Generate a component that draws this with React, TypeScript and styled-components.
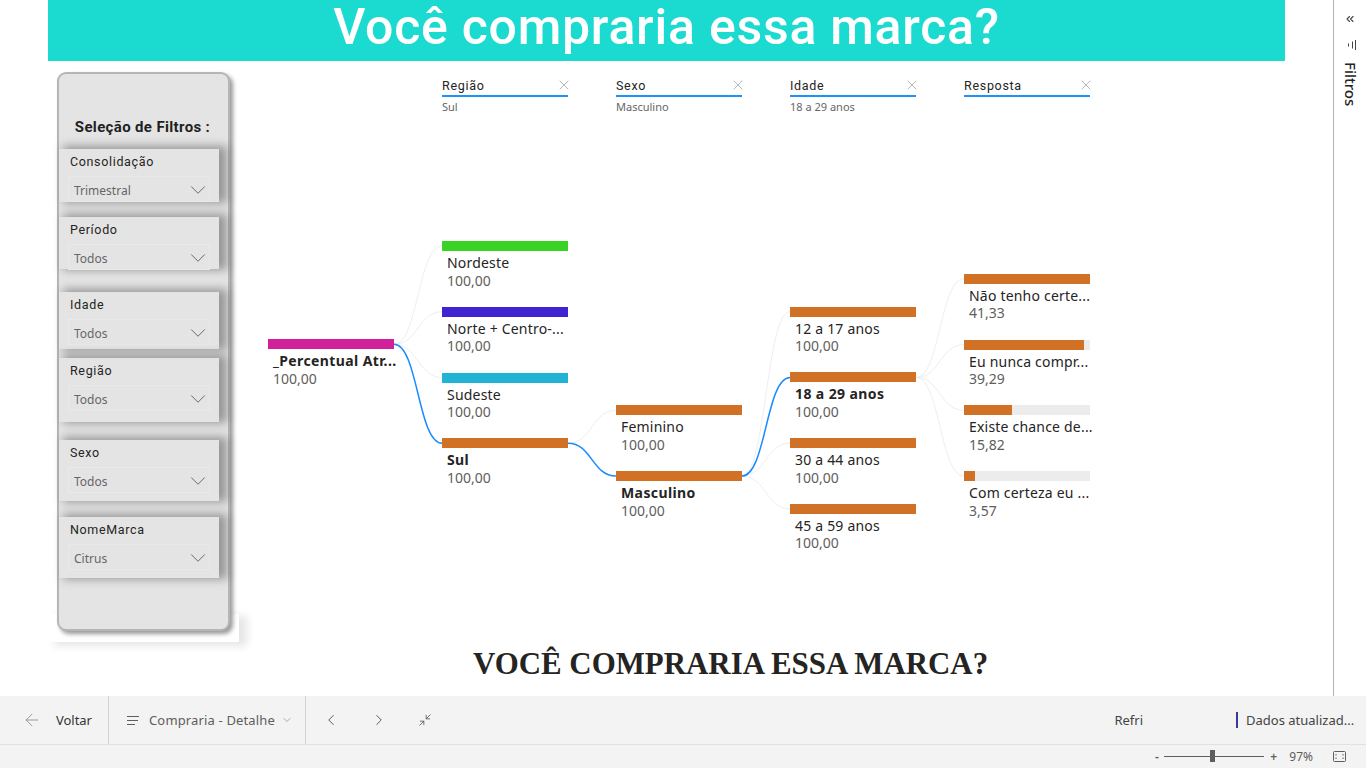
import React from 'react';
import styled, {createGlobalStyle} from 'styled-components';
import {ArrowLeft, ChevronDown, ChevronLeft, ChevronRight, ChevronsLeft, Minimize2, X} from 'lucide-react';

const GlobalStyle = createGlobalStyle`
  html {
    background: #fff;
  }
  html, body {
    margin: 0;
    padding: 0;
    overflow: hidden;
  }
  * {
    box-sizing: border-box;
  }
  body {
    font-family: "Noto Sans", "Open Sans", sans-serif;
    color: #252423;
  }
`;

const DIN = `"Roboto", "Noto Sans", sans-serif`;

const Page = styled.div`
  width: 1366px;
  height: 768px;
  display: flex;
  flex-direction: column;
`;

const Main = styled.div`
  flex: 1;
  min-height: 0;
  display: flex;
`;

const Report = styled.div`
  width: 1333px;
  display: flex;
  flex-direction: column;
`;

const Banner = styled.h1`
  margin: 0 0 0 48px;
  width: 1237px;
  height: 61px;
  background: #1bdad0;
  color: #fff;
  font-family: ${DIN};
  font-size: 50px;
  font-weight: 500;
  line-height: 54px;
  letter-spacing: 0.75px;
  text-align: center;
`;

const Body = styled.div`
  flex: 1;
  display: flex;
  padding-left: 57px;
`;

const Panel = styled.aside`
  position: relative;
  width: 173px;
  height: 559px;
  margin-top: 11px;
  padding-top: 44px;
  background: #e4e4e4;
  border: 2px solid #b6b6b6;
  border-radius: 9px;
  box-shadow: 3px 3px 4px rgba(0, 0, 0, 0.4);

  &::before {
    content: '';
    position: absolute;
    z-index: -1;
    left: -11px;
    top: 540px;
    width: 191px;
    height: 28px;
    background: #fff;
    box-shadow: 7px 3px 8px 1px rgba(0, 0, 0, 0.1);
  }
`;

const PanelTitle = styled.div`
  font-family: ${DIN};
  font-size: 15px;
  font-weight: 700;
  line-height: 18px;
  text-align: center;
  color: #1f1f1f;
  letter-spacing: 0.35px;
  margin-right: 2px;
  margin-bottom: 13px;
`;

const Slicer = styled.div<{$height: number; $gap: number}>`
  width: 160px;
  height: ${({$height}) => $height}px;
  margin-top: ${({$gap}) => $gap}px;
  padding: 4px 9px 0 9px;
  background: #e4e4e4;
  box-shadow: 6px -1px 9px 2px rgba(0, 0, 0, 0.34);
`;

const SlicerLabel = styled.div`
  font-family: ${DIN};
  font-size: 12.5px;
  font-weight: 400;
  line-height: 18px;
  height: 23px;
  padding-left: 2px;
  letter-spacing: 0.65px;
  color: #252423;
`;

const Dropdown = styled.div`
  height: 26px;
  display: flex;
  align-items: center;
  justify-content: space-between;
  padding: 2px 4px 0 5px;
  border: 1px solid #e9e9e9;
  font-family: "Noto Sans", sans-serif;
  font-size: 12px;
  color: #666;
`;

const Tree = styled.div`
  position: relative;
  width: 822px;
  height: 560px;
  margin-top: 16px;
  display: grid;
  grid-template-columns: repeat(5, 126px);
  column-gap: 48px;
`;

const Links = styled.svg`
  position: absolute;
  left: 0;
  top: 0;
  pointer-events: none;
`;

const Column = styled.div`
  display: flex;
  flex-direction: column;
`;

const Header = styled.div`
  height: 39px;
`;

const HeaderTop = styled.div<{$visible: boolean}>`
  display: flex;
  align-items: center;
  justify-content: space-between;
  height: 20px;
  padding-bottom: 2px;
  border-bottom: ${({$visible}) => ($visible ? '2px solid #2090ff' : 'none')};
  font-family: ${DIN};
  font-size: 12.5px;
  font-weight: 400;
  letter-spacing: 0.7px;
  color: #252423;
`;

const CloseIcon = styled(X)`
  margin-right: -3.5px;
  color: #999;
`;

const HeaderValue = styled.div`
  font-size: 11px;
  line-height: 20px;
  color: #666;
`;

const Nodes = styled.div<{$top: number}>`
  display: flex;
  flex-direction: column;
  padding-top: ${({$top}) => $top}px;
`;

const Node = styled.div`
  position: relative;
  z-index: 1;
  height: 65.75px;
`;

const Track = styled.div`
  height: 10px;
  background: #ececec;
`;

const Fill = styled.div<{$color: string}>`
  height: 100%;
  background: ${({$color}) => $color};
`;

const NodeName = styled.div<{$selected?: boolean}>`
  margin: 3px 0 0 5px;
  font-size: 14px;
  line-height: 17.5px;
  font-weight: ${({$selected}) => ($selected ? 700 : 400)};
  letter-spacing: ${({$selected}) => ($selected ? 0.4 : 0.2)}px;
  color: #252423;
  white-space: nowrap;
`;

const NodeValue = styled.div`
  margin-left: 5px;
  font-size: 14px;
  line-height: 17px;
  color: #605e5c;
`;

const Title = styled.div`
  width: 822px;
  margin-top: 9px;
  padding-left: 205px;
  font-family: "Liberation Serif", serif;
  font-size: 30.9px;
  font-weight: 700;
  line-height: 36px;
  color: #252423;
  white-space: nowrap;
`;

const TreeArea = styled.div`
  margin-left: 38px;
`;

const Rail = styled.div`
  flex: 1;
  border-left: 1px solid #b4b4b4;
  display: flex;
  flex-direction: column;
  align-items: center;
  padding-top: 13px;
  color: #444;
`;

const RailLabel = styled.div`
  writing-mode: vertical-rl;
  margin: 12px 0 0 2px;
  font-size: 15px;
  font-weight: 500;
  color: #252423;
`;

const RailIcon = styled.svg`
  margin: 15px 0 0 6px;
`;

const Footer = styled.footer`
  height: 72px;
  background: #f3f3f3;
  display: flex;
  flex-direction: column;
`;

const Toolbar = styled.div`
  height: 49px;
  display: flex;
  align-items: stretch;
  border-bottom: 1px solid #e1e1e1;
  font-size: 13px;
  color: #444;
`;

const BackGroup = styled.div`
  width: 109px;
  display: flex;
  align-items: center;
  padding: 0 16px 0 22px;
  gap: 14px;
  border-right: 1px solid #d2d2d2;
  color: #333;
`;

const BackIcon = styled(ArrowLeft)`
  color: #888;
`;

const PageGroup = styled.div`
  width: 197px;
  display: flex;
  align-items: center;
  padding-left: 18px;
  gap: 9px;
  border-right: 1px solid #d2d2d2;
  color: #605e5c;
  letter-spacing: 0.15px;
`;

const NavGroup = styled.div`
  display: flex;
  align-items: center;
  padding-left: 16px;
  gap: 30px;
  color: #555;
`;

const Spacer = styled.div`
  flex: 1;
`;

const Refresh = styled.div`
  display: flex;
  align-items: center;
  margin-right: 93px;
`;

const Status = styled.div`
  display: flex;
  align-items: center;
  width: 130px;
`;

const StatusText = styled.span`
  border-left: 2px solid #3b3a8c;
  height: 16px;
  line-height: 16px;
  padding-left: 8px;
  white-space: nowrap;
`;

const ZoomBar = styled.div`
  flex: 1;
  display: flex;
  align-items: center;
  justify-content: flex-end;
  padding-right: 20px;
  font-size: 12px;
  color: #605e5c;
`;

const ZoomSign = styled.span`
  font-weight: 600;
  width: 7px;
  text-align: center;
`;

const Slider = styled.div`
  position: relative;
  width: 100px;
  height: 1px;
  margin: 0 6px 0 4px;
  background: #605e5c;
`;

const Thumb = styled.div`
  position: absolute;
  left: 46px;
  top: -6px;
  width: 5px;
  height: 12px;
  background: #605e5c;
`;

const ZoomValue = styled.span`
  margin: 0 20px 0 12px;
`;

type NodeData = {name: string; value: string; color: string; pct?: number; selected?: boolean};

type ColumnData = {label?: string; filter?: string; top: number; nodes: NodeData[]};

const ORANGE = '#d17125';

const columns: ColumnData[] = [
  {top: 223.3, nodes: [{name: '_Percentual Atr...', value: '100,00', color: '#d0219a', selected: true}]},
  {
    label: 'Região',
    filter: 'Sul',
    top: 125,
    nodes: [
      {name: 'Nordeste', value: '100,00', color: '#38d324'},
      {name: 'Norte + Centro-...', value: '100,00', color: '#4024d0'},
      {name: 'Sudeste', value: '100,00', color: '#22b2d4'},
      {name: 'Sul', value: '100,00', color: ORANGE, selected: true},
    ],
  },
  {
    label: 'Sexo',
    filter: 'Masculino',
    top: 289.3,
    nodes: [
      {name: 'Feminino', value: '100,00', color: ORANGE},
      {name: 'Masculino', value: '100,00', color: ORANGE, selected: true},
    ],
  },
  {
    label: 'Idade',
    filter: '18 a 29 anos',
    top: 190.7,
    nodes: [
      {name: '12 a 17 anos', value: '100,00', color: ORANGE},
      {name: '18 a 29 anos', value: '100,00', color: ORANGE, selected: true},
      {name: '30 a 44 anos', value: '100,00', color: ORANGE},
      {name: '45 a 59 anos', value: '100,00', color: ORANGE},
    ],
  },
  {
    label: 'Resposta',
    top: 157.8,
    nodes: [
      {name: 'Não tenho certe...', value: '41,33', color: ORANGE},
      {name: 'Eu nunca compr...', value: '39,29', color: ORANGE, pct: 95},
      {name: 'Existe chance de...', value: '15,82', color: ORANGE, pct: 38},
      {name: 'Com certeza eu ...', value: '3,57', color: ORANGE, pct: 9},
    ],
  },
];

const slicers = [
  {label: 'Consolidação', value: 'Trimestral', height: 53, gap: 0},
  {label: 'Período', value: 'Todos', height: 52, gap: 15},
  {label: 'Idade', value: 'Todos', height: 57, gap: 23},
  {label: 'Região', value: 'Todos', height: 64, gap: 9},
  {label: 'Sexo', value: 'Todos', height: 61, gap: 18},
  {label: 'NomeMarca', value: 'Citrus', height: 61, gap: 16},
];

const BAR_MID = 5;
const HEADER = 39;

// curves between the bars of two neighbouring columns
function linkPaths() {
  const paths: {d: string; active: boolean}[] = [];
  columns.forEach((col, i) => {
    const next = columns[i + 1];
    if (!next) return;
    const parentIndex = col.nodes.findIndex(n => n.selected);
    const y1 = HEADER + col.top + parentIndex * 65.75 + BAR_MID;
    const x1 = i * 174 + 126;
    const x2 = (i + 1) * 174;
    next.nodes.forEach((n, j) => {
      const y2 = HEADER + next.top + j * 65.75 + BAR_MID;
      const mid = (x1 + x2) / 2;
      paths.push({
        d: `M${x1} ${y1} C${mid} ${y1} ${mid} ${y2} ${x2} ${y2}`,
        active: !!n.selected,
      });
    });
  });
  return paths.sort((a, b) => Number(a.active) - Number(b.active));
}

export default function App() {
  return (
    <Page>
      <GlobalStyle />
      <Main>
        <Report>
          <Banner>Você compraria essa marca?</Banner>
          <Body>
            <Panel>
              <PanelTitle>Seleção de Filtros :</PanelTitle>
              {slicers.map(s => (
                <Slicer key={s.label} $height={s.height} $gap={s.gap}>
                  <SlicerLabel>{s.label}</SlicerLabel>
                  <Dropdown>
                    {s.value}
                    <ChevronDown size={26} strokeWidth={0.9} color="#666" style={{marginRight: -6}} />
                  </Dropdown>
                </Slicer>
              ))}
            </Panel>
            <TreeArea>
              <Tree>
                <Links width={822} height={560}>
                  {linkPaths().map((p, i) => (
                    <path
                      key={i}
                      d={p.d}
                      fill="none"
                      stroke={p.active ? '#1a8cff' : '#eeeeee'}
                      strokeWidth={p.active ? 1.5 : 1}
                    />
                  ))}
                </Links>
                {columns.map((col, i) => (
                  <Column key={i}>
                    <Header>
                      <HeaderTop $visible={!!col.label}>
                        {col.label}
                        {col.label && <CloseIcon size={16} strokeWidth={1.1} />}
                      </HeaderTop>
                      <HeaderValue>{col.filter}</HeaderValue>
                    </Header>
                    <Nodes $top={col.top}>
                      {col.nodes.map(n => (
                        <Node key={n.name}>
                          <Track>
                            <Fill $color={n.color} style={{width: `${n.pct ?? 100}%`}} />
                          </Track>
                          <NodeName $selected={n.selected}>{n.name}</NodeName>
                          <NodeValue>{n.value}</NodeValue>
                        </Node>
                      ))}
                    </Nodes>
                  </Column>
                ))}
              </Tree>
              <Title>VOCÊ COMPRARIA ESSA MARCA?</Title>
            </TreeArea>
          </Body>
        </Report>
        <Rail>
          <ChevronsLeft size={12} strokeWidth={2.2} />
          <RailIcon width="12" height="10" viewBox="0 0 12 10" fill="none" stroke="#444">
            <path d="M1.5 3.5v3M5.5 1.5v7M8.5 0v10" />
          </RailIcon>
          <RailLabel>Filtros</RailLabel>
        </Rail>
      </Main>
      <Footer>
        <Toolbar>
          <BackGroup>
            <BackIcon size={20} strokeWidth={1} />
            Voltar
          </BackGroup>
          <PageGroup>
            <svg width="13" height="11" viewBox="0 0 13 11" fill="none" stroke="#605e5c">
              <path d="M0 1.5h12M0 5.5h11M0 9.5h8" />
            </svg>
            Compraria - Detalhe
            <ChevronDown size={12} strokeWidth={1} style={{marginLeft: -3}} />
          </PageGroup>
          <NavGroup>
            <ChevronLeft size={18} strokeWidth={1.3} />
            <ChevronRight size={18} strokeWidth={1.3} />
            <Minimize2 size={14} strokeWidth={1.4} />
          </NavGroup>
          <Spacer />
          <Refresh>Refri</Refresh>
          <Status>
            <StatusText>Dados atualizad...</StatusText>
          </Status>
        </Toolbar>
        <ZoomBar>
          <ZoomSign>-</ZoomSign>
          <Slider>
            <Thumb />
          </Slider>
          <ZoomSign>+</ZoomSign>
          <ZoomValue>97%</ZoomValue>
          <svg width="13" height="11" viewBox="0 0 13 11" fill="none" stroke="#605e5c">
            <rect x="0.5" y="0.5" width="12" height="10" rx="1" />
            <path d="M3 3v5M10 3v5" strokeDasharray="1.5 2" />
          </svg>
        </ZoomBar>
      </Footer>
    </Page>
  );
}
